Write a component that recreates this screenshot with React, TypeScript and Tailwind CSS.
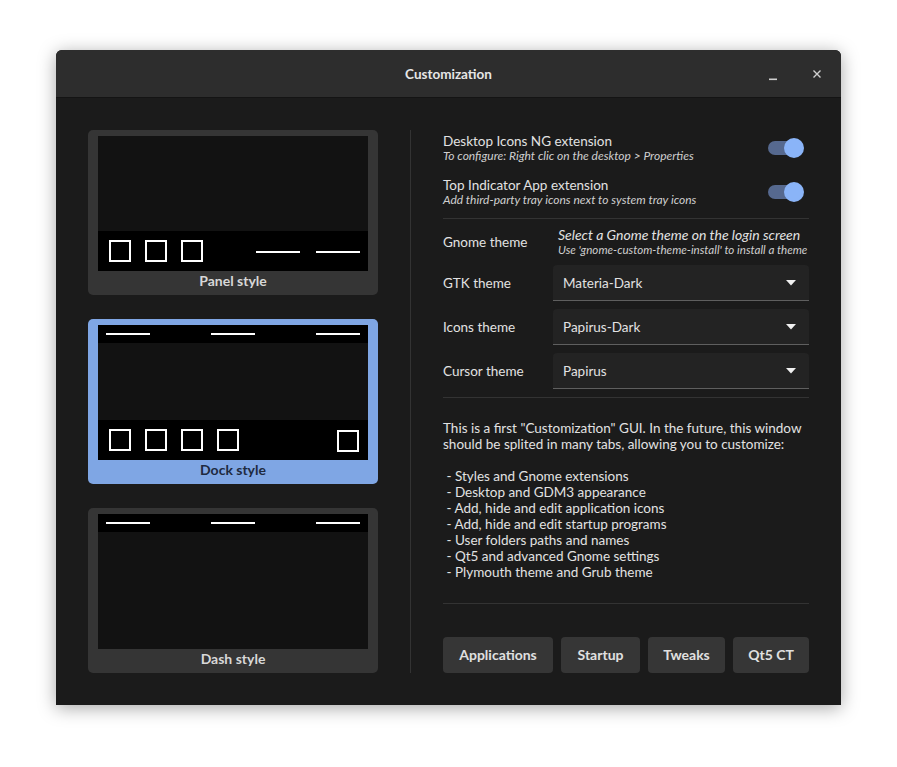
import React from "react";

const FONT = { fontFamily: "Lato, 'Noto Sans', sans-serif" };

function Sq() {
  return <div className="w-[22px] h-[22px] border-2 border-white" />;
}
function Ln() {
  return <div className="w-[44px] h-[2px] bg-white" />;
}

function TopBar() {
  return (
    <div className="h-[18px] bg-black flex items-center justify-between px-[8px]">
      <Ln />
      <Ln />
      <Ln />
    </div>
  );
}

function Card({
  label,
  selected,
  children,
}: {
  label: string;
  selected?: boolean;
  children: React.ReactNode;
}) {
  return (
    <div
      className={`w-[290px] h-[165px] rounded-[5px] pt-[6px] px-[10px] flex flex-col ${
        selected ? "bg-[#7fa6e4]" : "bg-[#353535]"
      }`}
    >
      <div className="w-[270px] h-[135px] shrink-0 bg-[#121212] flex flex-col">{children}</div>
      <div
        className={`flex-1 flex items-center justify-center text-[14px] leading-[16px] font-bold pb-[4px] ${
          selected ? "text-[#1e2a40]" : "text-[#d8d8d8]"
        }`}
      >
        {label}
      </div>
    </div>
  );
}

function Toggle() {
  return (
    <div className="relative w-[36px] h-[20px] mr-[5px]">
      <div className="absolute left-0 top-[3px] w-[32px] h-[14px] rounded-full bg-[#56698f]" />
      <div className="absolute right-0 top-0 w-[20px] h-[20px] rounded-full bg-[#8ab4f8]" />
    </div>
  );
}

function Dropdown({ label, value }: { label: string; value: string }) {
  return (
    <div className="flex items-center h-[36px]">
      <div className="w-[110px] text-[13.5px] text-[#e2e2e2]">{label}</div>
      <div className="w-[256px] h-[36px] bg-[#232323] rounded-t-[4px] border-b border-[#5f5f5f] flex items-center justify-between pl-[10px] pr-[13px]">
        <span className="text-[13.5px] text-[#e2e2e2] pt-[1px]">{value}</span>
        <svg width="10" height="6" viewBox="0 0 10 6">
          <path d="M0 0 L10 0 L5 5.5 Z" fill="#f0f0f0" />
        </svg>
      </div>
    </div>
  );
}

function Btn({ w, children }: { w: string; children: React.ReactNode }) {
  return (
    <div
      className={`${w} h-[36px] rounded-[4px] bg-[#363636] flex items-center justify-center text-[14px] font-bold text-[#e0e0e0] pb-[1px]`}
    >
      {children}
    </div>
  );
}

export default function App() {
  return (
    <div className="w-[897px] h-[767px] bg-white pl-[56px] pt-[50px]" style={FONT}>
      <div className="w-[785px] h-[655px] rounded-t-[6px] overflow-hidden shadow-[0_3px_18px_rgba(0,0,0,0.35)] flex flex-col bg-[#1b1b1b]">
        {/* Title bar */}
        <div className="h-[48px] bg-[#2d2d2d] border-b border-[#141414] flex items-center relative shrink-0">
          <div className="flex-1 text-center text-[13.5px] font-bold text-[#e6e6e6] pt-[1px]">
            Customization
          </div>
          <div className="absolute right-[19px] top-0 h-full flex items-center gap-[34px]">
            <svg width="10" height="10" viewBox="0 0 10 10" className="mt-[4px]">
              <rect x="1" y="7.5" width="8" height="1.6" fill="#cfcfcf" />
            </svg>
            <svg width="10" height="10" viewBox="0 0 10 10">
              <path d="M1.5 1.5 L8.5 8.5 M8.5 1.5 L1.5 8.5" stroke="#cfcfcf" strokeWidth="1.4" />
            </svg>
          </div>
        </div>

        {/* Body */}
        <div className="flex-1 flex p-[32px]">
          {/* Left column */}
          <div className="flex flex-col gap-[24px]">
            <Card label="Panel style">
              <div className="flex-1" />
              <div className="h-[40px] bg-black flex items-center pl-[11px] pr-[8px]">
                <div className="flex gap-[14px]">
                  <Sq />
                  <Sq />
                  <Sq />
                </div>
                <div className="flex-1" />
                <div className="flex gap-[16px] mt-[2px]">
                  <Ln />
                  <Ln />
                </div>
              </div>
            </Card>
            <Card label="Dock style" selected>
              <TopBar />
              <div className="flex-1" />
              <div className="h-[40px] bg-black flex items-center pl-[11px] pr-[9px]">
                <div className="flex gap-[14px]">
                  <Sq />
                  <Sq />
                  <Sq />
                  <Sq />
                </div>
                <div className="flex-1" />
                <div className="mt-[2px]">
                  <Sq />
                </div>
              </div>
            </Card>
            <Card label="Dash style">
              <TopBar />
              <div className="flex-1" />
            </Card>
          </div>

          {/* Separator */}
          <div className="w-px bg-[#333333] mx-[32px]" />

          {/* Right column */}
          <div className="w-[366px] flex flex-col">
            <div className="flex items-center mt-[3px]">
              <div className="flex-1">
                <div className="text-[13.5px] leading-[16px] text-[#e2e2e2]">Desktop Icons NG extension</div>
                <div className="text-[12px] leading-[14px] italic text-[#cfcfcf]">
                  To configure: Right clic on the desktop &gt; Properties
                </div>
              </div>
              <Toggle />
            </div>
            <div className="flex items-center mt-[14px]">
              <div className="flex-1">
                <div className="text-[13.5px] leading-[16px] text-[#e2e2e2]">Top Indicator App extension</div>
                <div className="text-[12px] leading-[14px] italic text-[#cfcfcf]">
                  Add third-party tray icons next to system tray icons
                </div>
              </div>
              <Toggle />
            </div>
            <div className="h-px bg-[#333333] mt-[11px]" />

            <div className="flex items-center mt-[8px]">
              <div className="w-[115px] text-[13.5px] text-[#e2e2e2]">Gnome theme</div>
              <div className="flex-1 whitespace-nowrap">
                <div className="text-[14px] leading-[16px] italic text-[#e2e2e2]">
                  Select a Gnome theme on the login screen
                </div>
                <div className="text-[11.6px] leading-[14px] italic text-[#cfcfcf]">
                  Use 'gnome-custom-theme-install' to install a theme
                </div>
              </div>
            </div>

            <div className="flex flex-col gap-[8px] mt-[8px]">
              <Dropdown label="GTK theme" value="Materia-Dark" />
              <Dropdown label="Icons theme" value="Papirus-Dark" />
              <Dropdown label="Cursor theme" value="Papirus" />
            </div>
            <div className="h-px bg-[#333333] mt-[8px]" />

            <div className="mt-[22px] text-[13.5px] leading-[16px] text-[#e2e2e2] whitespace-pre">
              {`This is a first "Customization" GUI. In the future, this window
should be splited in many tabs, allowing you to customize:

 - Styles and Gnome extensions
 - Desktop and GDM3 appearance
 - Add, hide and edit application icons
 - Add, hide and edit startup programs
 - User folders paths and names
 - Qt5 and advanced Gnome settings
 - Plymouth theme and Grub theme`}
            </div>

            <div className="h-px bg-[#333333] mt-[23px]" />
            <div className="flex-1" />
            <div className="flex gap-[8px]">
              <Btn w="w-[110px]">Applications</Btn>
              <Btn w="w-[79px]">Startup</Btn>
              <Btn w="w-[77px]">Tweaks</Btn>
              <Btn w="w-[76px]">Qt5 CT</Btn>
            </div>
          </div>
        </div>
      </div>
    </div>
  );
}
